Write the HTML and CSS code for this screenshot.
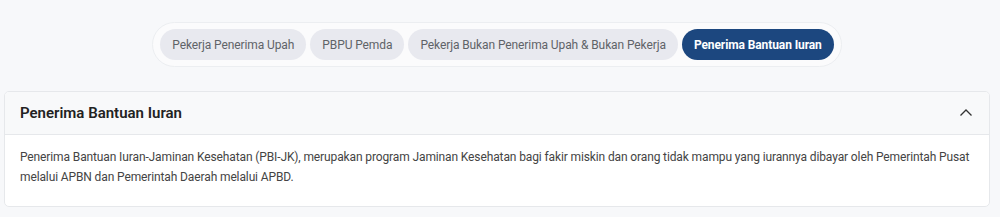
FILE: index.html
```html
<!DOCTYPE html>
<html lang="id">
<head>
  <meta charset="UTF-8" />
  <meta name="viewport" content="width=device-width, initial-scale=1.0"/>
  <title>Segmen Peserta</title>
  <link rel="stylesheet" href="styles.css">
</head>
<body>
  <div class="page">
    <div class="tab-row">
      <div class="tabs">
        <button class="tab">Pekerja Penerima Upah</button>
        <button class="tab">PBPU Pemda</button>
        <button class="tab">Pekerja Bukan Penerima Upah &amp; Bukan Pekerja</button>
        <button class="tab active">Penerima Bantuan Iuran</button>
      </div>
    </div>

    <div class="card">
      <div class="card-head">
        <h2>Penerima Bantuan Iuran</h2>
        <svg class="chevron" width="14" height="14" viewBox="0 0 14 14">
          <path d="M1.5 9.5 L7 4 L12.5 9.5" fill="none" stroke="#333" stroke-width="1.3"/>
        </svg>
      </div>
      <div class="card-body">
        <p>Penerima Bantuan Iuran-Jaminan Kesehatan (PBI-JK), merupakan program Jaminan Kesehatan bagi fakir miskin dan orang tidak mampu yang iurannya dibayar oleh Pemerintah Pusat melalui APBN dan Pemerintah Daerah melalui APBD.</p>
      </div>
    </div>
  </div>
</body>
</html>
```

FILE: styles.css
```css
body {
  margin: 0;
  background-color: #f7f8fa;
  font-family: Roboto, "Liberation Sans", sans-serif;
  color: #333;
}

.page {
  padding: 22px 10px 0 4px;
}

.tab-row {
  display: flex;
  justify-content: center;
}

.tabs {
  display: flex;
  gap: 4px;
  padding: 6px 7px;
  background-color: #fbfbfc;
  border: 1px solid #eceef1;
  border-radius: 24px;
}

.tab {
  font-family: inherit;
  font-size: 12px;
  letter-spacing: -0.1px;
  height: 31px;
  padding: 0 12px;
  border: none;
  border-radius: 16px;
  background-color: #e8e9ef;
  color: #5f6368;
  cursor: pointer;
}

.tab.active {
  background-color: #1c477f;
  color: #fff;
  font-weight: 700;
}

.card {
  margin-top: 24px;
  background-color: #fff;
  border: 1px solid #e6e8eb;
  border-radius: 5px;
  overflow: hidden;
}

.card-head {
  display: flex;
  align-items: center;
  justify-content: space-between;
  height: 42px;
  padding: 0 16px 0 15px;
  background-color: #f8f9fa;
  border-bottom: 1px solid #e6e8eb;
}

.card-head h2 {
  margin: 0;
  font-size: 15px;
  font-weight: 600;
  color: #222;
}

.card-body {
  padding: 12px 15px 19px;
}

.card-body p {
  margin: 0;
  font-size: 12px;
  letter-spacing: -0.12px;
  line-height: 20px;
  color: #444;
}
```
